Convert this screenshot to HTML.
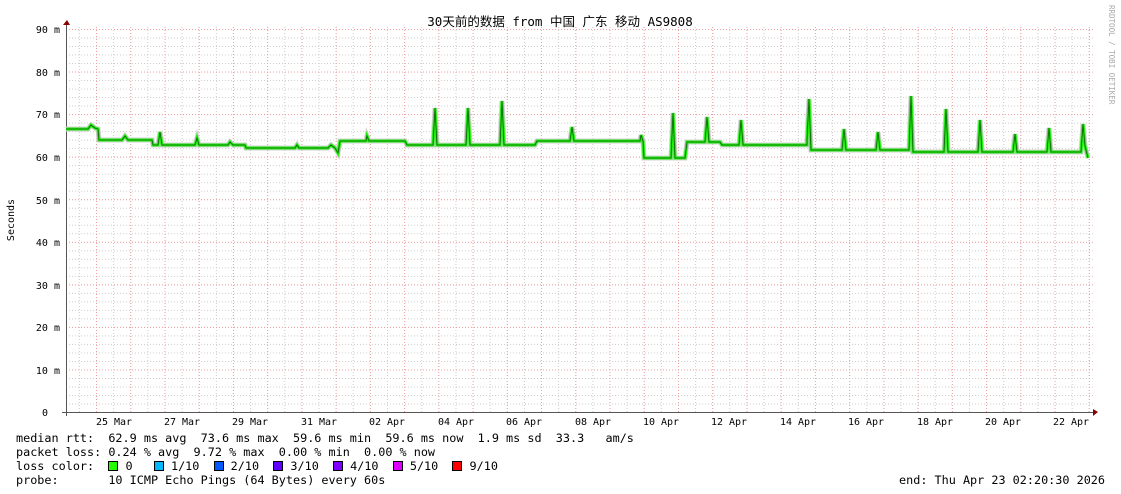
<!DOCTYPE html>
<html><head><meta charset="utf-8"><style>
html,body{margin:0;padding:0;background:#fff;width:1121px;height:494px;overflow:hidden}
svg{position:absolute;left:0;top:0}
.t{font-family:"DejaVu Sans Mono","Liberation Mono",monospace;font-size:10px;fill:#000}
.leg{position:absolute;left:16px;font-family:"DejaVu Sans Mono","Liberation Mono",monospace;font-size:11.8px;line-height:14px;white-space:pre;color:#000}
.b{display:inline-block;width:8px;height:8px;border:1px solid #000;vertical-align:-1px}
</style></head><body>
<svg width="1121" height="494" xmlns="http://www.w3.org/2000/svg">
<defs>
<pattern id="hm" patternUnits="userSpaceOnUse" x="0" y="29" width="1121" height="8.512"><line x1="0" y1="0.5" x2="1121" y2="0.5" stroke="#ccc" stroke-dasharray="1,2"/></pattern>
<pattern id="vm" patternUnits="userSpaceOnUse" x="96" y="0" width="17.117" height="494"><line x1="0.5" y1="0" x2="0.5" y2="494" stroke="#ccc" stroke-dasharray="1,2"/></pattern>
<pattern id="hM" patternUnits="userSpaceOnUse" x="0" y="29" width="1121" height="42.56"><line x1="0" y1="0.5" x2="1121" y2="0.5" stroke="#f0a0a0" stroke-dasharray="1,2"/></pattern>
<pattern id="vM" patternUnits="userSpaceOnUse" x="96" y="0" width="34.234" height="494"><line x1="0.5" y1="0" x2="0.5" y2="494" stroke="#f0a0a0" stroke-dasharray="1,2"/></pattern>
</defs>
<rect x="67" y="26" width="1026" height="386" fill="url(#hm)"/>
<rect x="67" y="26" width="1026" height="386" fill="url(#vm)"/>
<rect x="67" y="26" width="1026" height="386" fill="url(#hM)"/>
<rect x="67" y="26" width="1026" height="386" fill="url(#vM)"/>
<line x1="66.5" y1="24" x2="66.5" y2="416" stroke="#555"/>
<line x1="62" y1="412.5" x2="1094" y2="412.5" stroke="#555"/>
<path d="M63,25 L67,20 L70,25Z" fill="#800"/>
<path d="M1093,409 L1098,412 L1093,416Z" fill="#800"/>
<g class="t" text-anchor="end">
<text x="60" y="33">90 m</text><text x="60" y="76">80 m</text><text x="60" y="118">70 m</text><text x="60" y="161">60 m</text><text x="60" y="204">50 m</text><text x="60" y="246">40 m</text><text x="60" y="289">30 m</text><text x="60" y="331">20 m</text><text x="60" y="374">10 m</text><text x="48" y="416">0</text>
</g>
<g class="t" text-anchor="middle">
<text x="114" y="425">25 Mar</text><text x="182" y="425">27 Mar</text><text x="250" y="425">29 Mar</text><text x="319" y="425">31 Mar</text><text x="387" y="425">02 Apr</text><text x="456" y="425">04 Apr</text><text x="524" y="425">06 Apr</text><text x="593" y="425">08 Apr</text><text x="661" y="425">10 Apr</text><text x="729" y="425">12 Apr</text><text x="798" y="425">14 Apr</text><text x="866" y="425">16 Apr</text><text x="935" y="425">18 Apr</text><text x="1003" y="425">20 Apr</text><text x="1071" y="425">22 Apr</text>
</g>
<text class="t" x="0" y="0" font-size="11" transform="translate(14,220) rotate(-90)" text-anchor="middle">Seconds</text>
<text x="1109" y="5" font-family="DejaVu Sans Mono,monospace" font-size="7.5" fill="#aaa" transform="rotate(90 1109 5)">RRDTOOL / TOBI OETIKER</text>
<text x="560" y="26" text-anchor="middle" font-family="DejaVu Sans Mono,'Noto Sans CJK SC',monospace" font-size="12.5">30天前的数据 from 中国 广东 移动 AS9808</text>
<g fill="none" stroke-linejoin="miter">
<path id="d" d="M66,129 L88,129 L91,125 L95,128 L98,129 L99,140 L122,140 L125,136 L128,140 L152,140 L153,145 L158,145 L160,132 L162,145 L195,145 L197,138 L199,145 L228,145 L230,142 L233,145 L245,145 L246,148 L295,148 L297,145 L299,148 L328,148 L331,145 L335,148 L338,153 L340,141 L366,141 L367,136 L369,141 L405,141 L407,145 L433,145 L435,108 L437,145 L466,145 L468,108 L470,145 L500,145 L502,101 L504,145 L535,145 L537,141 L570,141 L572,127 L574,141 L640,141 L641,135 L643,141 L644,158 L671,158 L673,113 L675,158 L685,158 L687,142 L705,142 L707,117 L709,142 L720,142 L722,145 L739,145 L741,120 L743,145 L807,145 L807,140 L809,99 L811,150 L842,150 L844,129 L846,150 L876,150 L878,132 L880,150 L909,150 L911,96 L913,152 L944,152 L946,109 L948,152 L978,152 L980,120 L982,152 L1013,152 L1015,134 L1017,152 L1047,152 L1049,128 L1051,152 L1081,152 L1083,124 L1085,146 L1088,158"/>
</g>
<use href="#d" stroke="#d0d0d0" stroke-width="5" fill="none"/>
<use href="#d" stroke="#22ee11" stroke-width="3" fill="none"/>
<use href="#d" stroke="#000" stroke-width="0.8" stroke-opacity="0.6" fill="none"/>
</svg>
<div class="leg" style="top:431px">median rtt:  62.9 ms avg  73.6 ms max  59.6 ms min  59.6 ms now  1.9 ms sd  33.3   am/s
packet loss: 0.24 % avg  9.72 % max  0.00 % min  0.00 % now
loss color:  <span class="b" style="background:#26ff00"></span> 0   <span class="b" style="background:#00b8ff"></span> 1/10  <span class="b" style="background:#0059ff"></span> 2/10  <span class="b" style="background:#5e00ff"></span> 3/10  <span class="b" style="background:#7e00ff"></span> 4/10  <span class="b" style="background:#dd00ff"></span> 5/10  <span class="b" style="background:#ff0000"></span> 9/10
probe:       10 ICMP Echo Pings (64 Bytes) every 60s</div>
<div class="leg" style="top:473px;left:auto;right:16px">end: Thu Apr 23 02:20:30 2026</div>
</body></html>
